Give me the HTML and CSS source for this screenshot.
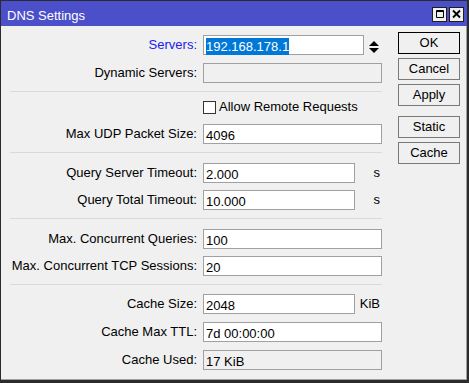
FILE: index.html
```html
<!DOCTYPE html>
<html lang="en">
<head>
    <meta charset="UTF-8">
    <title>DNS Settings</title>
    <link rel="stylesheet" href="styles.css">
</head>
<body>
    <div class="window">
        <div class="titlebar">
            <span class="title">DNS Settings</span>
            <div class="tbtns">
                <span class="tbtn">
                    <svg width="13" height="13" viewBox="0 0 13 13"><path d="M3.5 2.5h7v7h-7z M3 3.5h8" stroke="#000" fill="none"/></svg>
                </span>
                <span class="tbtn">
                    <svg width="13" height="13" viewBox="0 0 13 13"><path d="M3 2.5l7 7M10 2.5l-7 7" stroke="#000" stroke-width="1.8" fill="none"/></svg>
                </span>
            </div>
        </div>

        <div class="client">
            <div class="form">
                <div class="group">
                    <div class="row">
                        <span class="lbl link">Servers:</span>
                        <div class="ctl">
                            <div class="field spin"><span class="sel">192.168.178.1</span></div>
                            <svg class="spinner" width="10" height="12" viewBox="0 0 10 12">
                                <polygon points="0,5 5,0 10,5" fill="#000"/>
                                <polygon points="0,7 10,7 5,12" fill="#000"/>
                            </svg>
                        </div>
                    </div>
                    <div class="row">
                        <span class="lbl">Dynamic Servers:</span>
                        <div class="ctl"><div class="field ro"></div></div>
                    </div>
                </div>

                <hr class="sep">

                <div class="group">
                    <div class="row check">
                        <span></span>
                        <div class="ctl">
                            <span class="box"></span>
                            <span class="check-text">Allow Remote Requests</span>
                        </div>
                    </div>
                    <div class="row">
                        <span class="lbl">Max UDP Packet Size:</span>
                        <div class="ctl"><div class="field">4096</div></div>
                    </div>
                </div>

                <hr class="sep">

                <div class="group tight">
                    <div class="row">
                        <span class="lbl">Query Server Timeout:</span>
                        <div class="ctl"><div class="field short">2.000</div><span class="unit">s</span></div>
                    </div>
                    <div class="row">
                        <span class="lbl">Query Total Timeout:</span>
                        <div class="ctl"><div class="field short">10.000</div><span class="unit">s</span></div>
                    </div>
                </div>

                <hr class="sep">

                <div class="group tight">
                    <div class="row">
                        <span class="lbl">Max. Concurrent Queries:</span>
                        <div class="ctl"><div class="field">100</div></div>
                    </div>
                    <div class="row">
                        <span class="lbl">Max. Concurrent TCP Sessions:</span>
                        <div class="ctl"><div class="field">20</div></div>
                    </div>
                </div>

                <hr class="sep">

                <div class="group">
                    <div class="row">
                        <span class="lbl">Cache Size:</span>
                        <div class="ctl"><div class="field short">2048</div><span class="unit">KiB</span></div>
                    </div>
                    <div class="row">
                        <span class="lbl">Cache Max TTL:</span>
                        <div class="ctl"><div class="field">7d 00:00:00</div></div>
                    </div>
                    <div class="row">
                        <span class="lbl">Cache Used:</span>
                        <div class="ctl"><div class="field ro">17 KiB</div></div>
                    </div>
                </div>
            </div>

            <div class="buttons">
                <button class="btn default">OK</button>
                <button class="btn">Cancel</button>
                <button class="btn">Apply</button>
                <button class="btn spaced">Static</button>
                <button class="btn">Cache</button>
            </div>
        </div>
    </div>
</body>
</html>
```
FILE: styles.css
```css
* {
    margin: 0;
    padding: 0;
    box-sizing: border-box;
}

body {
    font-family: "Liberation Sans", Arial, sans-serif;
    font-size: 13px;
    color: #000;
    background: #f0f0f0;
}

.window {
    width: 469px;
    height: 383px;
    display: flex;
    flex-direction: column;
    border-style: solid;
    border-color: #2b2b2b;
    border-width: 1px 2px 3px 1px;
    background: #f0f0f0;
}

/* title bar */
.titlebar {
    height: 25px;
    flex: none;
    display: flex;
    align-items: center;
    padding: 0 3px 0 6px;
    background: #4b4fc9;
    color: #fff;
}

.title {
    line-height: 25px;
    padding-top: 4px;
}

.tbtns {
    margin-left: auto;
    display: flex;
    gap: 2px;
    padding-top: 1px;
}

.tbtn {
    width: 15px;
    height: 15px;
    display: flex;
    border: 1px solid #1e1e1e;
    background: #f0f0f0;
}

/* client area */
.client {
    flex: 1;
    display: flex;
    align-items: flex-start;
    padding: 6px 6px 0 9px;
    border-right: 1px solid #a0a0a0;
    border-bottom: 1px solid #a0a0a0;
}

.form {
    width: 372px;
    padding-top: 1px;
}

.group {
    display: flex;
    flex-direction: column;
    gap: 8px;
}

.group.tight {
    gap: 7px;
}

.sep {
    border: 0;
    border-top: 1px solid #d9d9d9;
    margin: 10px 0 8px;
}

.sep:last-of-type {
    margin-bottom: 7px;
}

.row {
    display: grid;
    grid-template-columns: 187px 179px;
    column-gap: 6px;
    height: 20px;
}

.lbl {
    text-align: right;
    line-height: 24px;
    white-space: nowrap;
}

.lbl.link {
    color: #2121ee;
}

.ctl {
    display: flex;
    align-items: center;
}

.field {
    width: 100%;
    height: 20px;
    border: 1px solid #a0a0a0;
    background: #fff;
    padding-left: 2px;
    line-height: 22px;
    white-space: nowrap;
}

.field.ro {
    background: #f0f0f0;
}

.field.short {
    width: 152px;
    flex: none;
}

.field.spin {
    width: 161px;
    flex: none;
    line-height: 21px;
}

.sel {
    background: #0078d7;
    color: #fff;
    padding: 1px 0;
}

.spinner {
    margin: 3px 0 0 5px;
}

.unit {
    flex: 1;
    align-self: stretch;
    text-align: right;
    padding-right: 2px;
    line-height: 24px;
}

/* checkbox row */
.row.check {
    height: 14px;
}

.row.check .ctl {
    align-items: flex-end;
}

.box {
    width: 13px;
    height: 13px;
    flex: none;
    border: 1px solid #333;
    background: #fff;
    margin-right: 3px;
}

.check-text {
    line-height: 14px;
    white-space: nowrap;
}

/* side buttons */
.buttons {
    width: 62px;
    margin-left: 16px;
    display: flex;
    flex-direction: column;
    gap: 4px;
}

.btn {
    height: 22px;
    border: 1px solid #7a7a7a;
    background: #f0f0f0;
    font: inherit;
    color: #000;
    line-height: 20px;
    text-align: center;
}

.btn.default {
    border-color: #000;
}

.btn.spaced {
    margin-top: 6px;
}
```
